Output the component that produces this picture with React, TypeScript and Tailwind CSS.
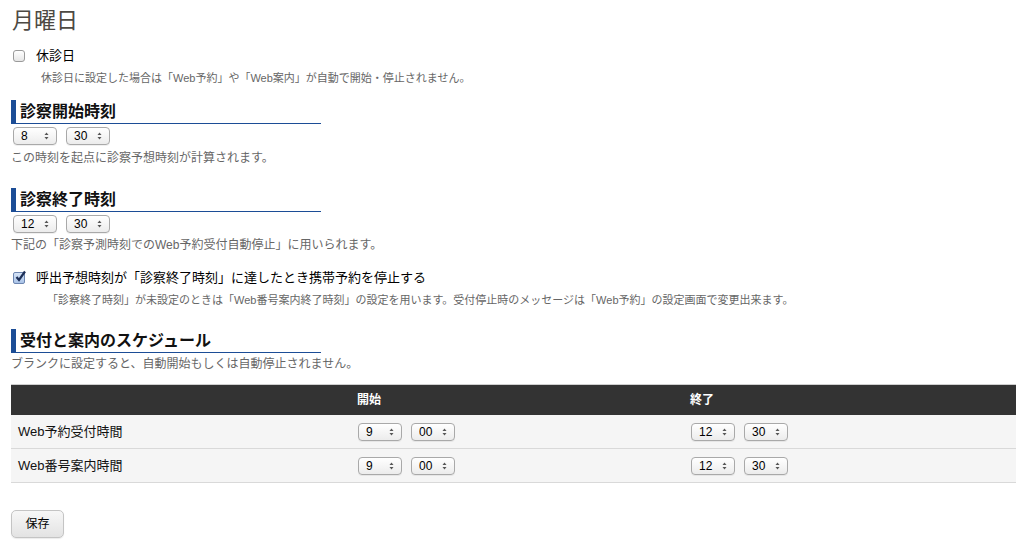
import { useState } from 'react'

const FONT = { fontFamily: '"Liberation Sans", "Noto Sans CJK JP", sans-serif' }

const hours = Array.from({ length: 24 }, (_, i) => String(i))
const minutes = ['00', '15', '30', '45']

function TimeSelect({ value, options }: { value: string; options: string[] }) {
  const [v, setV] = useState(value)
  return (
    <span className="relative inline-flex h-[18px] w-[44px]">
      <select
        value={v}
        onChange={(e) => setV(e.target.value)}
        className="h-[18px] w-[44px] appearance-none rounded-[4px] border border-[#a9a9a9] bg-gradient-to-b from-white to-[#ececec] pl-[7px] text-[12px] leading-[16px] text-black shadow-[0_1px_0_rgba(0,0,0,0.06)] outline-none"
        style={FONT}
      >
        <option value="">　</option>
        {options.map((o) => (
          <option key={o} value={o}>
            {o}
          </option>
        ))}
      </select>
      <svg className="pointer-events-none absolute right-[8px] top-[5px]" width="5" height="8" viewBox="0 0 5 8">
        <path d="M2.5 0.5 L4.5 3 L0.5 3 Z" fill="#555" />
        <path d="M2.5 7.5 L4.5 5 L0.5 5 Z" fill="#555" />
      </svg>
    </span>
  )
}

function Check({ checked }: { checked: boolean }) {
  const [on, setOn] = useState(checked)
  return (
    <button
      type="button"
      onClick={() => setOn(!on)}
      className={
        on
          ? 'relative h-[12px] w-[12px] shrink-0 rounded-[2px] border border-[#6d86b0] bg-gradient-to-b from-[#d6e4f7] to-[#a9c3e8]'
          : 'relative h-[12px] w-[12px] shrink-0 rounded-[3px] border border-[#9a9a9a] bg-gradient-to-b from-white to-[#e6e6e6]'
      }
    >
      {on && (
        <svg className="absolute -top-[3px] left-[0px]" width="13" height="13" viewBox="0 0 13 13">
          <path d="M2.5 7 L5 10 L11 1.5" fill="none" stroke="#1d2f57" strokeWidth="2.2" />
        </svg>
      )}
    </button>
  )
}

function Heading({ children }: { children: string }) {
  return (
    <h2 className="w-[310px] border-b border-l-[5px] border-[#1c4d96] pl-[4px] text-[16px] font-bold leading-[23px] text-[#111]">
      {children}
    </h2>
  )
}

const rows = [
  { label: 'Web予約受付時間', start: ['9', '00'], end: ['12', '30'] },
  { label: 'Web番号案内時間', start: ['9', '00'], end: ['12', '30'] },
]

export default function App() {
  return (
    <div className="min-h-screen bg-white px-[11px] pb-[12px] pr-[7px] pt-[6px] text-[#222]" style={FONT}>
      <h1 className="pl-[1px] text-[22px] font-normal leading-[30px] text-[#4d4943]">月曜日</h1>

      <label className="mt-[10px] flex items-center gap-[11px] pl-[2px] text-[13px] leading-[20px] text-black">
        <Check checked={false} />
        休診日
      </label>
      <p className="mt-[4px] pl-[30px] text-[11px] leading-[16px] text-[#666]">
        休診日に設定した場合は「Web予約」や「Web案内」が自動で開始・停止されません。
      </p>

      <div className="mt-[14px]">
        <Heading>診察開始時刻</Heading>
      </div>
      <div className="mt-[3px] flex gap-[9px] pl-[2px]">
        <TimeSelect value="8" options={hours} />
        <TimeSelect value="30" options={minutes} />
      </div>
      <p className="mt-[4px] text-[12px] leading-[18px] text-[#666]">この時刻を起点に診察予想時刻が計算されます。</p>

      <div className="mt-[21px]">
        <Heading>診察終了時刻</Heading>
      </div>
      <div className="mt-[3px] flex gap-[9px] pl-[2px]">
        <TimeSelect value="12" options={hours} />
        <TimeSelect value="30" options={minutes} />
      </div>
      <p className="mt-[3px] text-[12px] leading-[18px] text-[#666]">
        下記の「診察予測時刻でのWeb予約受付自動停止」に用いられます。
      </p>

      <label className="mt-[14px] flex items-center gap-[11px] pl-[2px] text-[13px] leading-[20px] text-black">
        <Check checked={true} />
        呼出予想時刻が「診察終了時刻」に達したとき携帯予約を停止する
      </label>
      <p className="mt-[4px] pl-[36px] text-[11px] leading-[16px] text-[#666]">
        「診察終了時刻」が未設定のときは「Web番号案内終了時刻」の設定を用います。受付停止時のメッセージは「Web予約」の設定画面で変更出来ます。
      </p>

      <div className="mt-[21px]">
        <Heading>受付と案内のスケジュール</Heading>
      </div>
      <p className="mt-[2px] text-[12px] leading-[18px] text-[#666]">
        ブランクに設定すると、自動開始もしくは自動停止されません。
      </p>

      <div className="mt-[11px] border-t border-[#cfcfcf]">
        <div className="grid h-[30px] grid-cols-[339px_333px_1fr] items-center bg-[#333] text-[12px] font-bold text-white">
          <div className="px-[7px]"></div>
          <div className="px-[7px]">開始</div>
          <div className="px-[7px]">終了</div>
        </div>
        {rows.map((r) => (
          <div
            key={r.label}
            className="grid h-[34px] grid-cols-[339px_333px_1fr] items-center border-b border-[#d9d9d9] bg-[#f5f5f5] text-[13px] text-[#111]"
          >
            <div className="px-[7px]">{r.label}</div>
            <div className="flex gap-[9px] px-[8px]">
              <TimeSelect value={r.start[0]} options={hours} />
              <TimeSelect value={r.start[1]} options={minutes} />
            </div>
            <div className="flex gap-[9px] px-[8px]">
              <TimeSelect value={r.end[0]} options={hours} />
              <TimeSelect value={r.end[1]} options={minutes} />
            </div>
          </div>
        ))}
      </div>

      <button
        type="button"
        className="mt-[27px] h-[28px] w-[53px] rounded-[5px] border border-[#c4c4c4] bg-gradient-to-b from-[#f7f7f7] to-[#e3e3e3] text-[12px] text-black shadow-[0_1px_1px_rgba(0,0,0,0.08)]"
      >
        保存
      </button>
    </div>
  )
}
